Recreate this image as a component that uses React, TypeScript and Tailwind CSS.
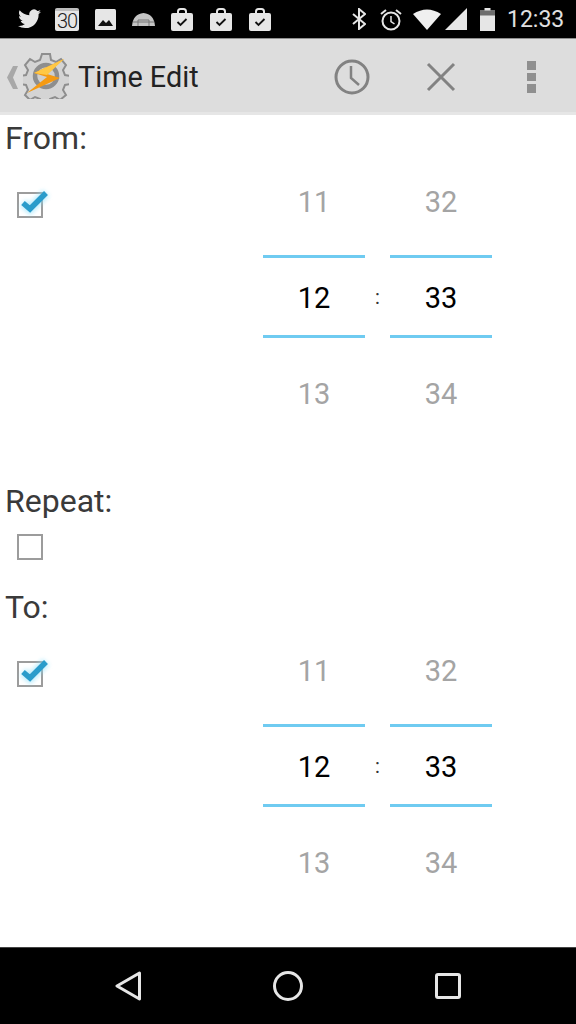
import React from "react";

const Case = () => (
  <svg width="22" height="23" viewBox="0 0 22 23" className="mr-[17px]">
    <path d="M7 6V3.500Q7 1 9.500 1h3Q15 1 15 3.500V6" fill="none" stroke="#e6e6e6" strokeWidth="2" />
    <rect x="0" y="5" width="22" height="18" rx="2" fill="#e6e6e6" />
    <path d="M6.500 14l3 3 6-6" fill="none" stroke="#111" strokeWidth="1.800" />
  </svg>
);

const Check = ({ checked }: { checked?: boolean }) => (
  <div className="relative w-[26px] h-[26px] border-2 border-[#9c9c9c] bg-white">
    {checked && (
      <svg width="36" height="32" viewBox="0 0 36 32" className="absolute left-[-2px] top-[-9px] overflow-visible">
        <path d="M6 18l7 6L29 8" fill="none" stroke="#8fe0fa" strokeWidth="9" opacity="0.6" className="blur-[2px]" />
        <path d="M6 18l7 6L29 8" fill="none" stroke="#2a9ccb" strokeWidth="5.500" />
      </svg>
    )}
  </div>
);

const Num = ({ t, c }: { t: string; c: string }) => (
  <div className={`text-[29px] leading-[40px] text-center ${c}`}>{t}</div>
);

const Col = ({ a, b, c }: { a: string; b: string; c: string }) => (
  <div className="w-[102px] flex flex-col">
    <div className="h-[94px] pt-[21px]"><Num t={a} c="text-[#a4a4a4]" /></div>
    <div className="h-[3px] bg-[#6fcbf1]" />
    <div className="h-[77px] pt-[2px] flex items-center justify-center"><Num t={b} c="text-black" /></div>
    <div className="h-[3px] bg-[#6fcbf1]" />
    <div className="pt-[36px] h-[140px]"><Num t={c} c="text-[#a4a4a4]" /></div>
  </div>
);

const Picker = () => (
  <div className="flex pl-[17px] h-[317px]">
    <div className="mt-[31px]"><Check checked /></div>
    <div className="ml-[220px] flex">
      <Col a="11" b="12" c="13" />
      <div className="w-[25px] h-[272px] flex items-center justify-center text-[20px] text-[#333]">:</div>
      <Col a="32" b="33" c="34" />
    </div>
  </div>
);

const Label = ({ t }: { t: string }) => (
  <div className="h-[46px] pl-[5px] flex items-center text-[32px] text-[#3a3a3a]">{t}</div>
);

export default function App() {
  return (
    <div className="w-[576px] h-[1024px] flex flex-col bg-white overflow-hidden" style={{ fontFamily: "Roboto, sans-serif" }}>
      {/* Status bar */}
      <div className="h-[38px] bg-black flex items-center pl-[18px] shrink-0">
        <svg width="23" height="20" viewBox="0 0 24 20" className="mr-[14px]">
          <path fill="#e6e6e6" d="M24 2.400c-.9.4-1.800.7-2.800.8 1-.6 1.800-1.600 2.200-2.700-1 .6-2 1-3.100 1.200A4.900 4.900 0 0 0 11.900 6.200C7.800 6 4.200 4 1.700.9c-1.300 2.200-.7 5.100 1.500 6.600-.8 0-1.600-.2-2.200-.6 0 2.400 1.700 4.400 3.900 4.900-.7.2-1.500.2-2.200.1.600 2 2.400 3.400 4.600 3.400A9.900 9.900 0 0 1 0 17.300 14 14 0 0 0 7.500 19.500c9.100 0 14.300-7.700 14-14.600 1-.7 1.800-1.500 2.500-2.500z" />
        </svg>
        <div className="relative w-[24px] h-[23px] mr-[16px] bg-[#e6e6e6] rounded-[2px] flex items-end justify-center border-t-[3px] border-t-[#bdbdbd]">
          <span className="text-[#222] text-[20px] leading-[19px] tracking-[-1px] font-light">30</span>
        </div>
        <svg width="21" height="21" viewBox="0 0 21 21" className="mr-[16px]">
          <rect width="21" height="21" rx="1.500" fill="#e6e6e6" />
          <path d="M3 17l5-6 3 3 3-3 4 6z" fill="#111" />
        </svg>
        <svg width="23" height="13" viewBox="0 0 23 13" className="mr-[16px]">
          <path d="M0 13Q1 1 11.500 0Q22 1 23 13z" fill="#c4c4c4" />
          <path d="M6 13V7h11v6M1 9h21" stroke="#777" strokeWidth="1" fill="none" />
        </svg>
        <Case />
        <Case />
        <Case />
        <svg width="14" height="22" viewBox="0 0 14 22" className="ml-[64px] mr-[14px]">
          <path d="M1 6l12 10-6 5V1l6 5L1 16" fill="none" stroke="#e6e6e6" strokeWidth="2" />
        </svg>
        <svg width="22" height="23" viewBox="0 0 22 23" className="mr-[11px]">
          <circle cx="11" cy="13" r="8.500" fill="none" stroke="#e6e6e6" strokeWidth="2" />
          <path d="M11 8v5.500l3.500 2.500" fill="none" stroke="#e6e6e6" strokeWidth="1.500" />
          <path d="M1 6l5-4M21 6l-5-4" stroke="#e6e6e6" strokeWidth="2" />
        </svg>
        <svg width="28" height="21" viewBox="0 0 28 21" className="mr-[4px]">
          <path d="M0 5Q14-4 28 5L14 21z" fill="#f0f0f0" />
        </svg>
        <svg width="22" height="22" viewBox="0 0 22 22" className="mr-[13px]">
          <path d="M22 0v22H0z" fill="#e6e6e6" />
        </svg>
        <svg width="15" height="23" viewBox="0 0 15 23" className="mr-[12px]">
          <path d="M4.500 0h6v2.500H15V23H0V2.500h4.500z" fill="#e6e6e6" />
          <rect y="2.500" width="15" height="5" fill="#6e6e6e" />
        </svg>
        <span className="text-[23px] text-[#e0e0e0] leading-none">12:33</span>
      </div>

      {/* Action bar */}
      <div className="h-[77px] bg-[#dddddd] border-t-[1px] border-t-[#8f8f8f] border-b-[3px] border-b-[#e6e6e6] flex items-center shrink-0 pl-[7px] pt-[3px]">
        <svg width="11" height="23" viewBox="0 0 11 23" className="mr-[5px]">
          <path d="M11 0H6L0 11.500 6 23h5L6 11.500z" fill="#a8a8a8" />
        </svg>
        <svg width="46" height="46" viewBox="0 0 46 46" className="mr-[9px] mb-[2px]">
          <path d="M19 1h8l1 6 5 2 5-3 5 6-3 5 2 5 6 1v8l-6 1-2 5 3 5-6 5-5-3-5 2-1 6h-8l-1-6-5-2-5 3-5-5 3-5-2-5-6-1v-8l6-1 2-5-3-5 5-6 5 3 5-2z" fill="#d4d4d4" stroke="#8e8e8e" strokeWidth="2" />
          <circle cx="23" cy="23" r="11" fill="#cfcfcf" stroke="#8e8e8e" strokeWidth="4.500" />
          <path d="M41 6L11 20l13 4L4 40l33-15-13-4z" fill="#f59a12" />
          <path d="M41 6L11 20l13 2z" fill="#ffc845" />
        </svg>
        <span className="text-[28.8px] text-[#222] leading-none">Time Edit</span>
        <svg width="36" height="36" viewBox="0 0 36 36" className="ml-[135px] mr-[56px]">
          <circle cx="18" cy="18" r="16" fill="none" stroke="#828282" strokeWidth="3" />
          <path d="M17 7v12l8 7" fill="none" stroke="#828282" strokeWidth="2.500" />
        </svg>
        <svg width="30" height="30" viewBox="0 0 30 30" className="mr-[71px]">
          <path d="M2 2l26 26M28 2L2 28" stroke="#828282" strokeWidth="3" />
        </svg>
        <div className="flex flex-col gap-[3px]">
          <div className="w-[9px] h-[9px] bg-[#8f8f8f]" />
          <div className="w-[9px] h-[8px] bg-[#8f8f8f]" />
          <div className="w-[9px] h-[9px] bg-[#8f8f8f]" />
        </div>
      </div>

      {/* Content */}
      <div className="flex-1 flex flex-col min-h-0">
        <Label t="From:" />
        <Picker />
        <Label t="Repeat:" />
        <div className="h-[60px] pl-[17px] pt-[10px]"><Check /></div>
        <Label t="To:" />
        <Picker />
      </div>

      {/* Nav bar */}
      <div className="h-[77px] bg-black border-t border-t-[#444] flex items-center shrink-0 pl-[115px] pb-[1px]">
        <svg width="26" height="30" viewBox="0 0 26 30" className="mr-[132px]">
          <path d="M24.500 2L2 15l22.500 13z" fill="none" stroke="#e6e6e6" strokeWidth="3" strokeLinejoin="round" />
        </svg>
        <svg width="30" height="30" viewBox="0 0 30 30" className="mr-[132px]">
          <circle cx="15" cy="15" r="13.500" fill="none" stroke="#e6e6e6" strokeWidth="3" />
        </svg>
        <svg width="26" height="26" viewBox="0 0 26 26">
          <rect x="1.500" y="1.500" width="23" height="23" rx="1.500" fill="none" stroke="#e6e6e6" strokeWidth="3" />
        </svg>
      </div>
    </div>
  );
}
